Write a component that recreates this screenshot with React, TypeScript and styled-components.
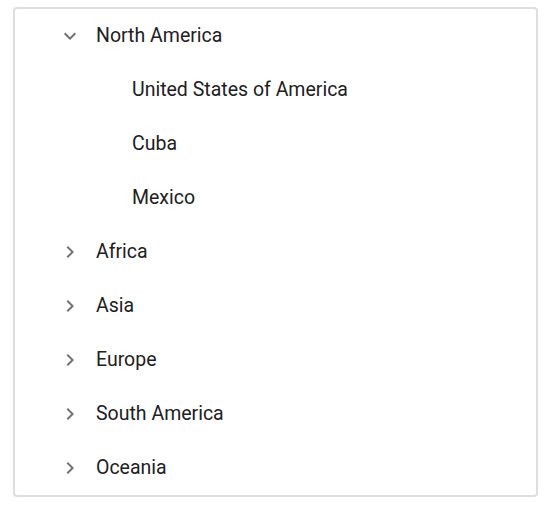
import React, { useState } from "react";
import styled, { createGlobalStyle } from "styled-components";

const Global = createGlobalStyle`
  html, body { margin: 0; padding: 0; background: #ffffff; }
  body { font-family: Roboto, "Noto Sans", sans-serif; }
`;

const Page = styled.div`
  padding: 7px 10px 10px 13px;
`;

const Tree = styled.ul`
  list-style: none;
  margin: 0;
  padding: 0;
  border: 2px solid #dedede;
  border-radius: 4px;
  box-sizing: border-box;
  width: 525px;
`;

const Row = styled.li<{ $level: number }>`
  display: flex;
  align-items: center;
  height: 54px;
  padding-left: ${(p) => (p.$level === 0 ? 43 : 117)}px;
  box-sizing: border-box;
  color: #212121;
  font-size: 19.5px;
  cursor: pointer;
`;

const IconBox = styled.span`
  display: inline-flex;
  align-items: center;
  justify-content: center;
  width: 24px;
  height: 24px;
  margin-right: 14px;
  color: #727272;
`;

const Label = styled.span`
  line-height: 24px;
`;

const Chevron = ({ open }: { open: boolean }) => (
  <svg width="24" height="24" viewBox="0 0 24 24">
    {open ? (
      <path d="M7.41 8.59L12 13.17l4.59-4.58L18 10l-6 6-6-6 1.41-1.41z" fill="currentColor" />
    ) : (
      <path d="M8.59 16.59L13.17 12 8.59 7.41 10 6l6 6-6 6-1.41-1.41z" fill="currentColor" />
    )}
  </svg>
);

const data = [
  { name: "North America", children: ["United States of America", "Cuba", "Mexico"] },
  { name: "Africa", children: ["Nigeria", "Egypt"] },
  { name: "Asia", children: ["China", "India"] },
  { name: "Europe", children: ["France", "Germany"] },
  { name: "South America", children: ["Brazil", "Argentina"] },
  { name: "Oceania", children: ["Australia", "New Zealand"] },
];

export default function App() {
  const [open, setOpen] = useState<Record<string, boolean>>({ "North America": true });
  return (
    <Page>
      <Global />
      <Tree>
        {data.map((d) => (
          <React.Fragment key={d.name}>
            <Row $level={0} onClick={() => setOpen({ ...open, [d.name]: !open[d.name] })}>
              <IconBox>
                <Chevron open={!!open[d.name]} />
              </IconBox>
              <Label>{d.name}</Label>
            </Row>
            {open[d.name] &&
              d.children.map((c) => (
                <Row key={c} $level={1}>
                  <Label>{c}</Label>
                </Row>
              ))}
          </React.Fragment>
        ))}
      </Tree>
    </Page>
  );
}
